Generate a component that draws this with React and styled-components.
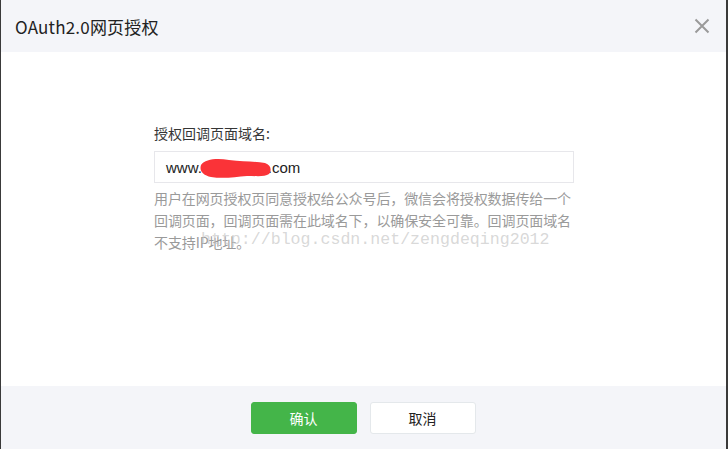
import React from "react";
import styled, { createGlobalStyle } from "styled-components";

const Global = createGlobalStyle`
  html, body {
    margin: 0;
    padding: 0;
    background: #fff;
  }
  body {
    font-family: "Noto Sans CJK SC", "Noto Sans", sans-serif;
  }
`

const Dialog = styled.div`
  width: 728px;
  height: 449px;
  box-sizing: border-box;
  border-left: 1px solid #3a3a3a;
  border-right: 2px solid #3a3a3a;
  display: flex;
  flex-direction: column;
  background: #fff;
`

const Header = styled.div`
  height: 52px;
  background: #f4f5f9;
  display: flex;
  align-items: center;
  justify-content: space-between;
  padding: 0 14px 0 14px;
`

const Title = styled.h3`
  margin: 0;
  font-size: 17px;
  font-weight: normal;
  color: #222;
  letter-spacing: 0.2px;
`

const Close = styled.button`
  border: 0;
  background: none;
  padding: 0;
  width: 20px;
  height: 20px;
  display: flex;
  align-items: center;
  justify-content: center;
  cursor: pointer;
`

const Body = styled.div`
  flex: 1;
  padding: 71px 0 0 153px;
`

const Field = styled.div`
  width: 420px;
  position: relative;
`

const Label = styled.div`
  font-size: 14px;
  line-height: 20px;
  color: #353535;
`

const InputBox = styled.div`
  margin-top: 8px;
  height: 32px;
  box-sizing: border-box;
  border: 1px solid #e7e7eb;
  padding: 0 11px;
  display: flex;
  align-items: center;
  font-family: "Liberation Sans", sans-serif;
  font-size: 15px;
  color: #222;
`

const Redacted = styled.span`
  position: relative;
  display: inline-block;
  width: 66px;
  overflow: visible;
  white-space: nowrap;
`

const Scribble = styled.svg`
  position: absolute;
  left: -3px;
  top: -3px;
`

const Help = styled.p`
  margin: 4px 0 0;
  font-size: 14px;
  line-height: 22px;
  color: #9a9a9a;
  letter-spacing: -0.1px;
`

const Watermark = styled.div`
  position: absolute;
  left: 47px;
  top: 107px;
  font-family: "Liberation Mono", monospace;
  font-size: 16.6px;
  color: rgba(195, 195, 195, 0.65);
  pointer-events: none;
  white-space: nowrap;
`

const Footer = styled.div`
  height: 63px;
  background: #f4f5f9;
  display: flex;
  justify-content: center;
  align-items: center;
  gap: 13px;
  padding-right: 1px;
`

const Button = styled.button`
  width: 106px;
  height: 32px;
  border-radius: 3px;
  font-family: "Noto Sans CJK SC", sans-serif;
  font-size: 14px;
  cursor: pointer;
  border: 1px solid ${p => (p.primary ? "#44b549" : "#e4e8eb")};
  background: ${p => (p.primary ? "#44b549" : "#fff")};
  color: ${p => (p.primary ? "#fff" : "#222")};
`

const App = () => {
  return (
    <Dialog>
      <Global />
      <Header>
        <Title>OAuth2.0网页授权</Title>
        <Close aria-label="关闭">
          <svg width="16" height="16" viewBox="0 0 16 16">
            <path d="M1.5 1.5 L14.5 14.5 M14.5 1.5 L1.5 14.5" stroke="#9a9a9a" strokeWidth="2" />
          </svg>
        </Close>
      </Header>
      <Body>
        <Field>
          <Label>授权回调页面域名:</Label>
          <InputBox>
            www.
            <Redacted>
              example
              <Scribble width="74" height="24" viewBox="0 0 74 24">
                <path
                  d="M2 9 C6 3 18 2 30 4 C44 6 56 5 66 7 C72 9 73 14 70 18 C66 21 58 20 48 20 C36 21 24 23 12 21 C4 19 0 15 2 9 Z"
                  fill="#fa3338"
                />
              </Scribble>
            </Redacted>
            .com
          </InputBox>
          <Help>
            用户在网页授权页同意授权给公众号后，微信会将授权数据传给一个回调页面，回调页面需在此域名下，以确保安全可靠。回调页面域名不支持IP地址。
          </Help>
          <Watermark>http://blog.csdn.net/zengdeqing2012</Watermark>
        </Field>
      </Body>
      <Footer>
        <Button primary>确认</Button>
        <Button>取消</Button>
      </Footer>
    </Dialog>
  );
};

export default App;
